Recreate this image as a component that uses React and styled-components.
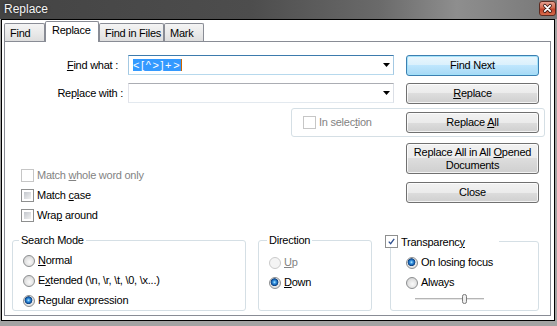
import React from "react";
import styled, { createGlobalStyle, css } from "styled-components";

const GlobalStyle = createGlobalStyle`
  html, body {
    margin: 0;
    padding: 0;
    background: #fff;
  }
  body {
    font-family: "Liberation Sans", Arial, sans-serif;
    font-size: 11px;
    color: #000;
  }
`;

const Window = styled.div`
  width: 557px;
  height: 326px;
  display: flex;
  flex-direction: column;
  background: #a3a3a3;
  overflow: hidden;
  letter-spacing: -0.25px;
`;

const TitleBar = styled.div`
  height: 19px;
  flex: none;
  display: flex;
  align-items: flex-start;
  background: linear-gradient(
    90deg,
    #444 0%,
    #4d4d4d 45%,
    #6a6a6a 68%,
    #8e8e8e 82%,
    #777 100%
  );
`;

const TitleText = styled.span`
  margin: 3px 0 0 4px;
  font-size: 12px;
  line-height: 13px;
  letter-spacing: 0;
  color: #f4f4f4;
  text-shadow: 0 0 3px rgba(0, 0, 0, 0.6);
`;

const CloseBox = styled.div`
  margin: 1px 1px 0 auto;
  width: 17px;
  height: 15px;
  line-height: 0;
`;

const Frame = styled.div`
  flex: 1;
  min-height: 0;
  margin: 0 2px 5px 1px;
  border: 1px solid #000;
  background: #fff;
  display: flex;
  flex-direction: column;
`;

const TabStrip = styled.div`
  flex: none;
  height: 22px;
  display: flex;
  align-items: flex-end;
  padding-left: 2px;
  margin-bottom: -1px;
  position: relative;
  z-index: 1;
`;

const Tab = styled.div`
  box-sizing: border-box;
  width: ${(p) => p.$w}px;
  height: ${(p) => (p.$active ? 21 : 18)}px;
  margin-bottom: ${(p) => (p.$active ? 0 : 1)}px;
  border: 1px solid #898c95;
  border-bottom: none;
  border-radius: 2px 2px 0 0;
  padding: ${(p) => (p.$active ? "2px 0 0 6px" : "3px 0 0 5px")};
  line-height: 13px;
  white-space: nowrap;
  overflow: hidden;
  background: ${(p) =>
    p.$active ? "#fff" : "linear-gradient(#f4f4f4, #e9e9e9 55%, #dedede)"};
`;

const Panel = styled.div`
  flex: 1;
  min-height: 0;
  margin: 0 3px 4px 2px;
  border: 1px solid #898c95;
  display: flex;
  flex-direction: column;
`;

const TopGrid = styled.div`
  display: grid;
  margin-top: 13px;
  grid-template-columns: 123px 266px 12px 133px 7px;
  grid-template-rows: 21px 7px 21px 4px 29px 6px 31px 8px 21px 19px;
  grid-template-areas:
    "fl fc . fn ."
    ". . . . ."
    "rl rc . rp ."
    ". . . . ."
    ". sel sel sel sel"
    ". . . . ."
    "ck ck . ad ."
    "ck ck . . ."
    "ck ck . cl ."
    "ck ck . . .";
`;

const FieldLabel = styled.label`
  grid-area: ${(p) => p.$area};
  text-align: right;
  line-height: 21px;
  padding-right: ${(p) => p.$pr}px;
  white-space: nowrap;
`;

const Combo = styled.div`
  grid-area: ${(p) => p.$area};
  align-self: start;
  box-sizing: border-box;
  height: 20px;
  display: flex;
  align-items: center;
  padding: 0 3px 0 4px;
  background: #fff;
  border: 1px solid;
  border-color: ${(p) =>
    p.$focused
      ? "#3d7bad #a4c9e3 #b7d9ed #a4c9e3"
      : "#abadb3 #dbdfe6 #e3e9ef #e2e3ea"};
`;

const Highlight = styled.span`
  background: #3399ff;
  color: #fff;
  line-height: 12px;
  letter-spacing: 1.6px;
`;

const Caret = styled.span`
  width: 1px;
  height: 12px;
  background: #cc6600;
`;

const Arrow = styled.svg`
  margin-left: auto;
`;

const Button = styled.button`
  ${(p) =>
    p.$area &&
    css`
      grid-area: ${p.$area};
    `}
  align-self: start;
  box-sizing: border-box;
  width: 133px;
  height: ${(p) => p.$h || 21}px;
  margin: 0;
  padding: 0 2px;
  font: inherit;
  letter-spacing: inherit;
  line-height: 13px;
  color: #000;
  white-space: nowrap;
  border-radius: 3px;
  border: 1px solid ${(p) => (p.$default ? "#3c7fb1" : "#707070")};
  background: ${(p) =>
    p.$default
      ? "linear-gradient(#eaf6fd, #d9f0fc 50%, #bee6fd 50%, #a7d9f5)"
      : "linear-gradient(#f2f2f2, #ebebeb 50%, #dddddd 50%, #cfcfcf)"};
  box-shadow: inset 0 0 0 1px
    ${(p) => (p.$default ? "rgba(160, 225, 250, 0.9)" : "rgba(255, 255, 255, 0.75)")};
`;

const SelectionBox = styled.div`
  grid-area: sel;
  justify-self: end;
  box-sizing: border-box;
  width: 254px;
  margin-right: 1px;
  border: 1px solid #d5dfe5;
  border-radius: 3px;
  display: flex;
  align-items: center;
  padding: 0 5px 0 11px;

  ${Button} {
    margin-left: auto;
    align-self: center;
  }
`;

const Checks = styled.div`
  grid-area: ck;
  display: flex;
  flex-direction: column;
  gap: 7px;
  padding: 26px 0 0 16px;
`;

const CheckRow = styled.div`
  display: flex;
  align-items: center;
  gap: 3px;
  height: 13px;
  line-height: 13px;
  white-space: nowrap;
  color: ${(p) => (p.$disabled ? "#838383" : "#000")};
`;

const Box = styled.span`
  flex: none;
  box-sizing: border-box;
  width: 13px;
  height: 13px;
  padding: 2px;
  display: flex;
  align-items: center;
  justify-content: center;
  border: 1px solid ${(p) => (p.$disabled ? "#c6c6c6" : "#8e8f8f")};
  background: ${(p) =>
    p.$disabled
      ? "#f4f4f4 content-box, #fff"
      : p.$checked
      ? "#fff"
      : "linear-gradient(135deg, #c3c7cd, #f1f1f1) content-box, #fff"};
`;

const Round = styled.span`
  flex: none;
  box-sizing: border-box;
  width: 12px;
  height: 12px;
  border-radius: 50%;
  border: 1px solid ${(p) => (p.$disabled ? "#cacaca" : "#8c8e90")};
  background: ${(p) =>
    p.$disabled
      ? "#f4f4f4"
      : p.$checked
      ? "radial-gradient(circle at 45% 42%, #c8efff 0, #4aa6ea 1.2px, #1a67b8 2.6px, #0c3f7c 3.6px, #e8e8e8 4.2px, #d5d5d5 100%)"
      : "radial-gradient(circle at 55% 60%, #fafafa 0, #e6e6e6 45%, #c9c9c9 100%)"};
`;

const GroupRow = styled.div`
  display: flex;
  margin-top: 12px;
  padding-left: 7px;
`;

const Group = styled.fieldset`
  box-sizing: border-box;
  width: ${(p) => p.$w}px;
  height: 77px;
  min-width: 0;
  margin: 0 0 0 ${(p) => p.$ml || 0}px;
  padding: ${(p) => p.$pt}px 0 0 ${(p) => p.$pl}px;
  border: 1px solid #d5dfe5;
  border-radius: 3px;
  display: flex;
  flex-direction: column;
  gap: 7px;
`;

const Legend = styled.legend`
  margin-left: ${(p) => p.$ml}px;
  padding: 0 2px;
  line-height: 12px;
  white-space: nowrap;
`;

const CheckLegend = styled(Legend)`
  padding: 1px 34px 0 0;
  display: flex;
  align-items: center;
  gap: 3px;
`;

const RadioRow = styled.div`
  display: flex;
  align-items: center;
  gap: 3px;
  height: 13px;
  line-height: 13px;
  white-space: nowrap;
  color: ${(p) => (p.$disabled ? "#838383" : "#000")};
`;

const Slider = styled.svg`
  margin: -2px 0 0 9px;
  display: block;
`;

function CheckMark() {
  return (
    <svg width="9" height="9" viewBox="0 0 9 9">
      <path
        d="M1 4.6 L3.4 7.2 L8 1"
        fill="none"
        stroke="#2f4f8f"
        strokeWidth="1.7"
      />
    </svg>
  );
}

function Check({ disabled, checked, children }) {
  return (
    <CheckRow $disabled={disabled}>
      <Box $disabled={disabled} $checked={checked}>
        {checked && <CheckMark />}
      </Box>
      <span>{children}</span>
    </CheckRow>
  );
}

function Radio({ disabled, checked, children }) {
  return (
    <RadioRow $disabled={disabled}>
      <Round $disabled={disabled} $checked={checked} />
      <span>{children}</span>
    </RadioRow>
  );
}

function ComboArrow() {
  return (
    <Arrow width="7" height="4" viewBox="0 0 7 4">
      <polygon points="0,0 7,0 3.5,4" fill="#000" />
    </Arrow>
  );
}

export default function App() {
  return (
    <>
      <GlobalStyle />
      <Window>
        <TitleBar>
          <TitleText>Replace</TitleText>
          <CloseBox>
            <svg width="17" height="15" viewBox="0 0 17 15">
              <defs>
                <linearGradient id="closeGrad" x1="0" y1="0" x2="0" y2="1">
                  <stop offset="0" stopColor="#e8a596" />
                  <stop offset="0.45" stopColor="#d36a50" />
                  <stop offset="0.55" stopColor="#c0422a" />
                  <stop offset="1" stopColor="#d9704f" />
                </linearGradient>
              </defs>
              <rect
                x="0.5"
                y="0.5"
                width="16"
                height="14"
                rx="2.5"
                fill="url(#closeGrad)"
                stroke="#5b2a20"
              />
              <path
                d="M5.8 4.6 L11.2 10.2 M11.2 4.6 L5.8 10.2"
                stroke="#3b1a14"
                strokeWidth="3.4"
                strokeLinecap="round"
              />
              <path
                d="M5.8 4.6 L11.2 10.2 M11.2 4.6 L5.8 10.2"
                stroke="#fff"
                strokeWidth="1.8"
                strokeLinecap="round"
              />
            </svg>
          </CloseBox>
        </TitleBar>

        <Frame>
          <TabStrip>
            <Tab $w={41}>Find</Tab>
            <Tab $w={54} $active>
              Replace
            </Tab>
            <Tab $w={65}>Find in Files</Tab>
            <Tab $w={40}>Mark</Tab>
          </TabStrip>

          <Panel>
            <TopGrid>
              <FieldLabel $area="fl" $pr={10}>
                <u>F</u>ind what :
              </FieldLabel>
              <Combo $area="fc" $focused>
                <Highlight>&lt;[^&gt;]+&gt;</Highlight>
                <Caret />
                <ComboArrow />
              </Combo>
              <Button $area="fn" $default>
                Find Next
              </Button>

              <FieldLabel $area="rl" $pr={5}>
                Rep<u>l</u>ace with :
              </FieldLabel>
              <Combo $area="rc">
                <ComboArrow />
              </Combo>
              <Button $area="rp">
                <u>R</u>eplace
              </Button>

              <SelectionBox>
                <Check disabled>
                  In selec<u>t</u>ion
                </Check>
                <Button>
                  Replace <u>A</u>ll
                </Button>
              </SelectionBox>

              <Checks>
                <Check disabled>
                  Match <u>w</u>hole word only
                </Check>
                <Check>
                  Match <u>c</u>ase
                </Check>
                <Check>
                  Wra<u>p</u> around
                </Check>
              </Checks>

              <Button $area="ad" $h={31}>
                Replace All in All <u>O</u>pened
                <br />
                Documents
              </Button>
              <Button $area="cl">Close</Button>
            </TopGrid>

            <GroupRow>
              <Group $w={234} $pt={8} $pl={10}>
                <Legend $ml={-4}>Search Mode</Legend>
                <Radio>
                  <u>N</u>ormal
                </Radio>
                <Radio>
                  E<u>x</u>tended (\n, \r, \t, \0, \x...)
                </Radio>
                <Radio checked>
                  Re<u>g</u>ular expression
                </Radio>
              </Group>

              <Group $w={114} $ml={12} $pt={10} $pl={10}>
                <Legend $ml={-2}>Direction</Legend>
                <Radio disabled>
                  <u>U</u>p
                </Radio>
                <Radio checked>
                  <u>D</u>own
                </Radio>
              </Group>

              <Group $w={149} $ml={18} $pt={8} $pl={15}>
                <CheckLegend $ml={-21}>
                  <Box $checked>
                    <CheckMark />
                  </Box>
                  <span>
                    Transparenc<u>y</u>
                  </span>
                </CheckLegend>
                <Radio checked>On losing focus</Radio>
                <Radio>Always</Radio>
                <Slider width="70" height="10" viewBox="0 0 70 10">
                  <rect x="0" y="4" width="69" height="1" fill="#b5b5b5" />
                  <rect x="0" y="5" width="69" height="1" fill="#e6e6e6" />
                  <rect
                    x="47.5"
                    y="0.5"
                    width="4"
                    height="9"
                    rx="1.8"
                    fill="#eeeeee"
                    stroke="#7a7a7a"
                  />
                </Slider>
              </Group>
            </GroupRow>
          </Panel>
        </Frame>
      </Window>
    </>
  );
}
